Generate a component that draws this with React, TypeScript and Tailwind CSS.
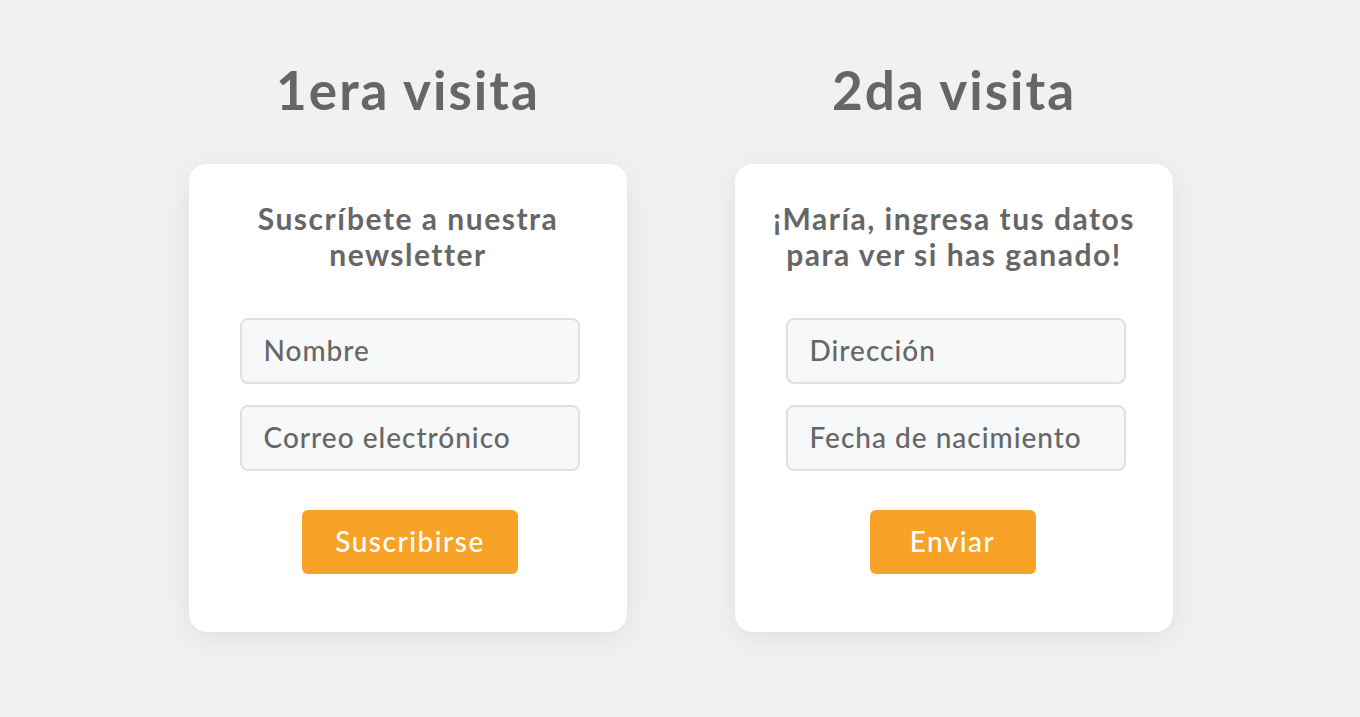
import React from "react";

const font = { fontFamily: "Lato, 'Open Sans', sans-serif" };

function Field({ label }: { label: string }) {
  return (
    <div className="flex h-[66px] w-[340px] items-center rounded-[8px] border-2 border-[#e0e0e0] bg-[#f7f8fa] pb-[2px] pl-[22px] text-[28px] font-medium tracking-[1px] text-[#666666]">
      {label}
    </div>
  );
}

function Column({
  heading,
  title,
  fields,
  cta,
  ctaClass,
}: {
  heading: string;
  title: React.ReactNode;
  fields: string[];
  cta: string;
  ctaClass: string;
}) {
  return (
    <div className="flex flex-col items-center">
      <h1 className="h-[62px] -translate-y-[3px] text-[53px] font-bold leading-[62px] tracking-[2px] text-[#666666]">
        {heading}
      </h1>
      <div className="mt-[40px] flex h-[468px] w-[438px] flex-col items-center rounded-[18px] bg-white pt-[36px] shadow-[0_6px_28px_rgba(0,0,0,0.07)]">
        <p className="text-center text-[30px] font-bold leading-[36px] tracking-[1.5px] text-[#666666]">{title}</p>
        <div className="mt-[46px] flex flex-col gap-[21px] pl-[3px]">
          {fields.map((f) => (
            <Field key={f} label={f} />
          ))}
        </div>
        <button
          className={`mt-[39px] flex h-[64px] items-center justify-center rounded-[6px] bg-[#f9a228] pb-[3px] text-[28px] font-medium tracking-[1.5px] text-white ${ctaClass}`}
        >
          {cta}
        </button>
      </div>
    </div>
  );
}

export default function App() {
  return (
    <div className="flex h-[717px] w-full justify-center gap-[108px] bg-[#f1f1f1] pl-[2px] pt-[62px]" style={font}>
      <Column
        heading="1era visita"
        title={
          <>
            Suscríbete a nuestra
            <br />
            newsletter
          </>
        }
        fields={["Nombre", "Correo electrónico"]}
        cta="Suscribirse"
        ctaClass="ml-[4px] w-[216px]"
      />
      <Column
        heading="2da visita"
        title={
          <>
            ¡María, ingresa tus datos
            <br />
            para ver si has ganado!
          </>
        }
        fields={["Dirección", "Fecha de nacimiento"]}
        cta="Enviar"
        ctaClass="ml-[-3px] w-[166px]"
      />
    </div>
  );
}
